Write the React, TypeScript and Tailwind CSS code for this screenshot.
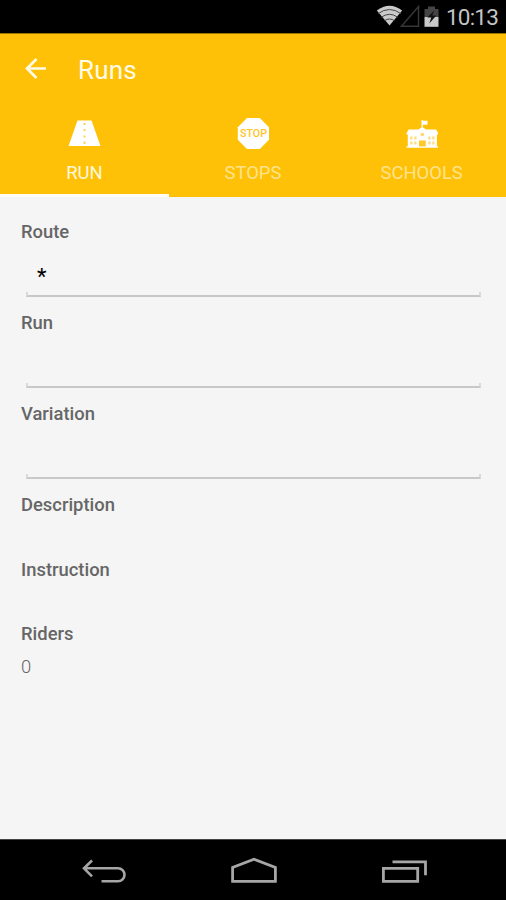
import type { ReactNode } from 'react';

interface TabItem {
  label: string;
  icon: ReactNode;
  active?: boolean;
}

function RoadIcon() {
  return (
    <svg width="34" height="34" viewBox="0 0 34 34">
      <path d="M10.5 4.6h14L33.5 29.9H1.5z" fill="#fff" />
      <path d="M17.5 7v2M17.5 13v2M17.5 19.5v2M17.5 25.5v2.5" stroke="#ffd050" strokeWidth="1.9" />
    </svg>
  );
}

function StopIcon() {
  return (
    <svg width="34" height="34" viewBox="0 0 34 34">
      <path d="M11 2h12.8l9.2 9.3v12.4L23.8 33H11l-9.2-9.3V11.3z" fill="#fff" />
      <text
        x="17.5"
        y="21.3"
        textAnchor="middle"
        textLength="27"
        lengthAdjust="spacingAndGlyphs"
        fontFamily="Roboto, sans-serif"
        fontWeight="500"
        fontSize="11.5"
        fill="#ffc526"
      >
        STOP
      </text>
    </svg>
  );
}

function SchoolIcon() {
  return (
    <svg width="34" height="34" viewBox="0 0 34 34">
      <path
        d="M16.5 4h1.3v.7h4.7v4h-4.7v2.8l3.5 2h9.8l2 3.6v1.4h-1.2v11.7h1.2v1.6H1.6v-1.6h1.2V18.5H1.6V17.1l2-3.6h9.6l3.3-2z"
        fill="#fff"
      />
      <circle cx="17.3" cy="18.5" r="1.8" fill="#ffd667" />
      <path d="M14 24.5h6.8v5.9H14z" fill="#ffc928" />
      <path
        d="M5.3 20.5h2.2v3H5.3zM9.3 20.5h2.2v3H9.3zM5.3 25.5h2.2v3H5.3zM9.3 25.5h2.2v3H9.3zM23.3 20.5h2.2v3h-2.2zM27.3 20.5h2.2v3h-2.2zM23.3 25.5h2.2v3h-2.2zM27.3 25.5h2.2v3h-2.2z"
        fill="#ffdb7c"
      />
    </svg>
  );
}

const tabs: TabItem[] = [
  { label: 'RUN', icon: <RoadIcon />, active: true },
  { label: 'STOPS', icon: <StopIcon /> },
  { label: 'SCHOOLS', icon: <SchoolIcon /> },
];

const fields = [
  { label: 'Route', value: '*' },
  { label: 'Run', value: '' },
  { label: 'Variation', value: '' },
];

function StatusBar() {
  return (
    <div className="flex h-[33px] items-center justify-end bg-black pr-[8px] text-[#c4c4c4]">
      <svg width="66" height="33" viewBox="0 0 66 33" className="mr-[4px]">
        <path d="M.8 10.5Q13.5 1 26.2 10.5L13.5 25.5z" fill="#c9c9c9" />
        <path
          d="M2 13.7q11.5-8.4 23 0M5.2 17.3q8.300-6 16.600 0M8.400 20.800q5.100-3.600 10.200 0"
          fill="none"
          stroke="#444"
          strokeWidth="1"
        />
        <path d="M42.5 6.5v19.7H25.5z" fill="none" stroke="#363636" strokeWidth="1.5" />
        <path d="M48.5 9H52V6.500h7V9h3.500v8h-14z" fill="#444" />
        <path d="M48.5 17h14v9.800h-14z" fill="#c9c9c9" />
        <path d="M58.3 10.500l-7 7h4l-2 6 7-8h-4z" fill="#111" />
      </svg>
      <span className="pt-[2px] text-[22.5px] leading-[31px] tracking-[-0.8px]">10:13</span>
    </div>
  );
}

function Header() {
  return (
    <header className="h-[164px] bg-[#ffc107] text-white">
      <div className="h-px bg-[#9c7600]" />
      <div className="flex h-[73px] items-center pb-[3px] pl-[25px]">
        <svg width="22" height="22" viewBox="0 0 22 22" fill="none" stroke="#fffbe9" strokeWidth="2.6">
          <path d="M21 10.5H2.5M11.5 1L2 10.5l9.5 9.5" />
        </svg>
        <h1 className="ml-[31px] pt-[1px] text-[26px] leading-[30px] tracking-[0.2px] text-[#fffbe8]">Runs</h1>
      </div>
      <nav className="grid h-[90px] grid-cols-3">
        {tabs.map(tab => (
          <button
            key={tab.label}
            className={`flex flex-col items-center border-b-3 pt-[9px] ${
              tab.active ? 'border-[#fffdf5] text-[#fff8dc]' : 'border-transparent text-[#ffe38e]'
            }`}
          >
            {tab.icon}
            <span className="mt-[12px] text-[18.4px] leading-[22px]">{tab.label}</span>
          </button>
        ))}
      </nav>
    </header>
  );
}

function Field({ label, value }: { label: string; value: string }) {
  return (
    <div className="h-[91px]">
      <div className="font-medium">{label}</div>
      <div className="ml-[5px] mr-[4px] mt-[12px] h-[36px] pl-[11px] text-[22px] leading-[42px] text-black">
        {value}
      </div>
      <div className="ml-[5px] mr-[4px] h-[5px] border-x-2 border-b-2 border-x-[#dadada] border-b-[#c8c8c8]" />
    </div>
  );
}

function NavigationBar() {
  return (
    <footer className="flex h-[61px] items-start border-t border-[#444] bg-black pl-[81px] pt-[17px]">
      <svg width="46" height="28" viewBox="0 0 46 28" fill="none" stroke="#a6a6a6" strokeWidth="2.6">
        <path d="M11 3.5L3 11.3l8 8M3 11.3h34a6.4 6.4 0 0 1 0 13H20.5" />
      </svg>
      <svg width="50" height="28" viewBox="0 0 50 28" fill="none" stroke="#a6a6a6" strokeWidth="2.8" className="ml-[101px]">
        <path d="M4.6 24.3V10.5l21.4-8.200 21.400 8.200v13.800z" />
      </svg>
      <svg width="48" height="28" viewBox="0 0 48 28" fill="none" stroke="#a6a6a6" strokeWidth="2.8" className="ml-[103px]">
        <path d="M2.4 11.3h34.3v13H2.4zM11.500 4.800h33v13.500" />
      </svg>
    </footer>
  );
}

export default function App() {
  return (
    <div className="flex h-[900px] w-[506px] flex-col overflow-hidden bg-[#f5f5f5] font-[Roboto,sans-serif]">
      <StatusBar />
      <Header />
      <main className="flex-1 px-[21px] pt-[23px] text-[18.4px] leading-[24px] text-[#666]">
        {fields.map(field => (
          <Field key={field.label} label={field.label} value={field.value} />
        ))}
        <div className="h-[65px] font-medium">Description</div>
        <div className="h-[64px] font-medium">Instruction</div>
        <div className="font-medium">Riders</div>
        <div className="mt-[9px] font-light">0</div>
      </main>
      <NavigationBar />
    </div>
  );
}
